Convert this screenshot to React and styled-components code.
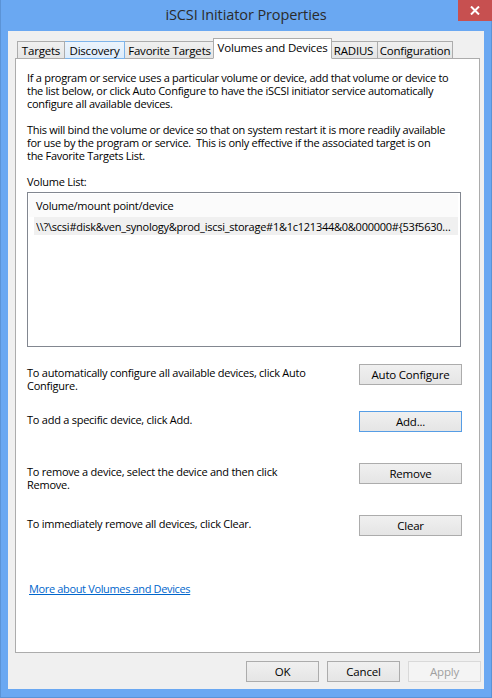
import React from "react";
import styled, { createGlobalStyle } from "styled-components";

const GlobalStyle = createGlobalStyle`
  html, body {
    margin: 0;
    padding: 0;
    background: #6aa8f2;
  }
  body {
    font-family: "Open Sans", "Noto Sans", sans-serif;
    font-size: 11px;
    color: #000;
  }
`;

const Window = styled.div`
  width: 492px;
  height: 698px;
  display: flex;
  flex-direction: column;
  background: #6aa8f2;
  box-sizing: border-box;
  border: 1px solid #5b93d6;
  border-top: none;
`;

const TitleBar = styled.div`
  height: 31px;
  display: flex;
  align-items: center;
  justify-content: center;
  position: relative;
`;

const Title = styled.div`
  font-size: 14.5px;
  color: #2b2b2b;
  margin-top: -2px;
  letter-spacing: -0.1px;
`;

const CloseButton = styled.div`
  position: absolute;
  top: 0;
  right: -1px;
  width: 34px;
  height: 21px;
  background: #c75050;
  display: flex;
  align-items: center;
  justify-content: center;
`;

const Client = styled.div`
  flex: 1;
  margin: 0 7px 8px 7px;
  background: #f0f0f0;
  display: flex;
  flex-direction: column;
  padding: 7px 4px 7px 7px;
`;

const TabStrip = styled.div`
  display: flex;
  align-items: flex-end;
  padding-left: 2px;
  margin-bottom: -1px;
  height: 21px;
`;

const Tab = styled.div`
  width: ${(p) => p.$w}px;
  box-sizing: border-box;
  height: ${(p) => (p.$active ? 21 : 18)}px;
  margin: ${(p) => (p.$active ? "0 -2px" : "0")};
  display: flex;
  align-items: center;
  justify-content: center;
  padding-bottom: ${(p) => (p.$active ? 3 : 0)}px;
  border: 1px solid ${(p) => (p.$hover ? "#7eb4ea" : "#acacac")};
  border-left-width: ${(p) => (p.$first || p.$active ? 1 : 0)}px;
  border-bottom-color: ${(p) => (p.$active ? "#fff" : p.$hover ? "#7eb4ea" : "#acacac")};
  background: ${(p) =>
    p.$active
      ? "#fff"
      : p.$hover
      ? "linear-gradient(#ecf4fc, #dcecfc)"
      : "linear-gradient(#f0f0f0, #e5e5e5)"};
  position: relative;
  z-index: ${(p) => (p.$active ? 2 : p.$hover ? 1 : 0)};
  white-space: nowrap;
  font-size: 11.5px;
  letter-spacing: -0.2px;
`;

const Panel = styled.div`
  flex: 1;
  background: #fff;
  border: 1px solid #acacac;
  padding: 12px 11px 0 11px;
  display: flex;
  flex-direction: column;
`;

const Para = styled.p`
  margin: 0 0 13px 0;
  line-height: 13px;
  white-space: nowrap;
  letter-spacing: -0.28px;
`;

const Label = styled.div`
  line-height: 13px;
  letter-spacing: -0.25px;
  margin-bottom: 4px;
`;

const ListBox = styled.div`
  width: 434px;
  height: 155px;
  box-sizing: border-box;
  border: 1px solid #828790;
  padding: 1px 2px 0 1px;
`;

const ListHeader = styled.div`
  height: 23px;
  display: flex;
  align-items: center;
  padding-left: 7px;
  background: #fbfbfb;
  letter-spacing: -0.25px;
`;

const ListRow = styled.div`
  height: 18px;
  margin-left: 5px;
  padding: 0 5px 0 2px;
  display: flex;
  align-items: center;
  background: ${(p) => (p.$selected ? "#f0f0f0" : "transparent")};
  letter-spacing: -0.25px;
`;

const RowText = styled.span`
  overflow: hidden;
  white-space: nowrap;
  text-overflow: ellipsis;
`;

const ActionRow = styled.div`
  display: flex;
  justify-content: space-between;
  align-items: flex-start;
  margin-top: ${(p) => p.$top}px;
  padding-right: 6px;
`;

const ActionText = styled.div`
  line-height: 13px;
  padding-top: 2px;
  white-space: nowrap;
  letter-spacing: -0.25px;
`;

const Button = styled.button`
  width: ${(p) => p.$w || 103}px;
  height: 21px;
  box-sizing: border-box;
  font-family: inherit;
  font-size: 11.5px;
  letter-spacing: -0.2px;
  color: ${(p) => (p.disabled ? "#a0a0a0" : "#000")};
  border: 1px solid
    ${(p) => (p.$focus ? "#569de5" : p.disabled ? "#d9d9d9" : "#acacac")};
  background: ${(p) =>
    p.disabled ? "#f4f4f4" : "linear-gradient(#f0f0f0, #e5e5e5)"};
  padding: 0;
  border-radius: 0;
  display: flex;
  align-items: center;
  justify-content: center;
  flex-shrink: 0;
`;

const Link = styled.a`
  margin-top: 46px;
  margin-left: 2px;
  color: #0066cc;
  text-decoration: underline;
  line-height: 13px;
  letter-spacing: -0.35px;
  align-self: flex-start;
  cursor: pointer;
`;

const Footer = styled.div`
  display: flex;
  justify-content: flex-end;
  gap: 8px;
  padding-top: 8px;
  margin-right: -1px;
`;

export default function App() {
  return (
    <>
      <GlobalStyle />
      <Window>
        <TitleBar>
          <Title>iSCSI Initiator Properties</Title>
          <CloseButton>
            <svg width="10" height="9" viewBox="0 0 10 9">
              <path d="M1 0.5 L9 8.5 M9 0.5 L1 8.5" stroke="#fff" strokeWidth="2" />
            </svg>
          </CloseButton>
        </TitleBar>
        <Client>
          <TabStrip>
            <Tab $w={48} $first>Targets</Tab>
            <Tab $w={60} $hover>Discovery</Tab>
            <Tab $w={90}>Favorite Targets</Tab>
            <Tab $w={119} $active>Volumes and Devices</Tab>
            <Tab $w={48}>RADIUS</Tab>
            <Tab $w={75}>Configuration</Tab>
          </TabStrip>
          <Panel>
            <Para>
              If a program or service uses a particular volume or device, add that volume or device to
              <br />
              the list below, or click Auto Configure to have the iSCSI initiator service automatically
              <br />
              configure all available devices.
            </Para>
            <Para>
              This will bind the volume or device so that on system restart it is more readily available
              <br />
              for use by the program or service.&nbsp; This is only effective if the associated target is on
              <br />
              the Favorite Targets List.
            </Para>
            <Label>Volume List:</Label>
            <ListBox>
              <ListHeader>Volume/mount point/device</ListHeader>
              <ListRow $selected>
                <RowText>
                  {"\\\\?\\scsi#disk&ven_synology&prod_iscsi_storage#1&1c121344&0&000000#{53f56307-b6bf-11d0-94f2-00a0c91efb8b}"}
                </RowText>
              </ListRow>
            </ListBox>
            <ActionRow $top={17}>
              <ActionText>
                To automatically configure all available devices, click Auto
                <br />
                Configure.
              </ActionText>
              <Button>Auto Configure</Button>
            </ActionRow>
            <ActionRow $top={19}>
              <ActionText>To add a specific device, click Add.</ActionText>
              <Button $focus>Add...</Button>
            </ActionRow>
            <ActionRow $top={31}>
              <ActionText>
                To remove a device, select the device and then click
                <br />
                Remove.
              </ActionText>
              <Button>Remove</Button>
            </ActionRow>
            <ActionRow $top={24}>
              <ActionText>To immediately remove all devices, click Clear.</ActionText>
              <Button>Clear</Button>
            </ActionRow>
            <Link>More about Volumes and Devices</Link>
          </Panel>
          <Footer>
            <Button $w={73}>OK</Button>
            <Button $w={73}>Cancel</Button>
            <Button $w={73} disabled>
              Apply
            </Button>
          </Footer>
        </Client>
      </Window>
    </>
  );
}
